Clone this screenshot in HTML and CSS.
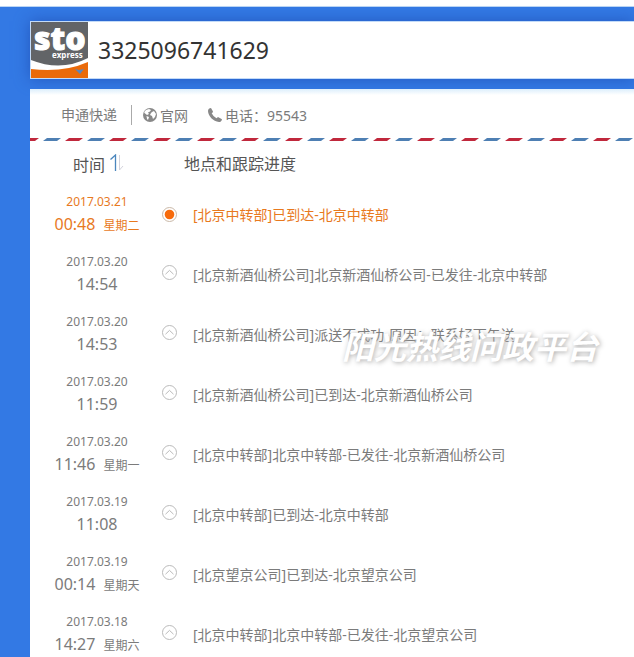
FILE: index.html
```html
<!DOCTYPE html>
<html lang="zh-CN">
<head>
    <meta charset="UTF-8">
    <meta name="viewport" content="width=device-width, initial-scale=1.0">
    <title>申通快递 3325096741629</title>
    <link rel="stylesheet" href="styles.css">
</head>
<body>
    <svg class="sprite" aria-hidden="true">
        <symbol id="up" viewBox="0 0 15 15">
            <circle cx="7.5" cy="7.5" r="7" fill="#fff" stroke="#bbb"/>
            <path d="M3.5 9.2 7.5 5.4l4 3.8" fill="none" stroke="#bbb"/>
        </symbol>
    </svg>
    <main class="page">
        <div class="search">
            <svg class="logo" viewBox="0 0 57 56" role="img" aria-label="sto express">
                <rect width="57" height="56" fill="#626467"/>
                <path d="M0 38q30 12 57-2v20H0z" fill="#fff"/>
                <path d="M0 47q32 4 57-7v16H0z" fill="#ea6a0a"/>
                <path d="M44 47l4 1 5-1-4 5z" fill="#5b86bd"/>
                <text class="logo-name" x="3" y="28">sto</text>
                <text class="logo-sub" x="21" y="36">express</text>
            </svg>
            <input class="number" type="text" value="3325096741629" aria-label="快递单号">
        </div>
        <section class="sheet">
            <nav class="company">
                <span class="company-name">申通快递</span>
                <a class="company-link" href="#">
                    <svg width="14" height="14" viewBox="0 0 14 14">
                        <circle cx="7" cy="7" r="7" fill="#888"/>
                        <path d="M6 1 8 2 7 3.500 5 4.500 6 6 4 7 1.500 5 1.200 4 3 2zM9 4l2-1 2 3-1 3-2 2-1-3-2-1 1-2zM3.500 8 6 9 5 12 4 11z" fill="#fff"/>
                    </svg>
                    官网
                </a>
                <a class="company-link" href="tel:95543">
                    <svg width="14" height="14" viewBox="0 0 14 14">
                        <path d="M3 0 5 3.500Q5 4.500 3.700 5.200 5 8.300 8.500 10.300L10 9l4 2.200q-.5 2.800-3 2.800C5 13.500.3 8 0 3 0 1 1.500.3 3 0z" fill="#888"/>
                    </svg>
                    电话：95543
                </a>
            </nav>
            <svg class="stripe" aria-hidden="true">
                <defs>
                    <pattern id="airmail" x="-9" width="44" height="3" patternUnits="userSpaceOnUse">
                        <path d="M4 0h14l-4 3H0z" fill="#c0283c"/>
                        <path d="M26 0h14l-4 3H22z" fill="#4e7fb3"/>
                    </pattern>
                </defs>
                <rect width="100%" height="3" fill="url(#airmail)"/>
            </svg>
            <table class="track">
                <colgroup>
                    <col class="col-when">
                    <col class="col-mark">
                    <col>
                </colgroup>
                <thead>
                    <tr>
                        <th class="head-time">
                            <span>时间</span>
                            <svg width="15" height="18" viewBox="0 0 15 18">
                                <path d="M1.500 5.500 6.500 1v16" fill="none" stroke="#4a86bd" stroke-width="1.300"/>
                                <path d="M10.500 1v15l3.500-4" fill="none" stroke="#d3d3dc"/>
                            </svg>
                        </th>
                        <th class="head-place" colspan="2">地点和跟踪进度</th>
                    </tr>
                </thead>
                <tbody>
                    <tr class="current">
                        <td class="when"><div class="date">2017.03.21</div><div class="time">00:48<span class="week">星期二</span></div></td>
                        <td class="mark">
                            <svg width="15" height="15" viewBox="0 0 15 15">
                                <circle cx="7.5" cy="7.5" r="7" fill="#fff" stroke="#c9b8a8"/>
                                <circle cx="7.5" cy="7.5" r="4.8" fill="#f76b0c"/>
                            </svg>
                        </td>
                        <td class="place">[北京中转部]已到达-北京中转部</td>
                    </tr>
                    <tr>
                        <td class="when"><div class="date">2017.03.20</div><div class="time">14:54</div></td>
                        <td class="mark"><svg width="15" height="15"><use href="#up"/></svg></td>
                        <td class="place">[北京新酒仙桥公司]北京新酒仙桥公司-已发往-北京中转部</td>
                    </tr>
                    <tr>
                        <td class="when"><div class="date">2017.03.20</div><div class="time">14:53</div></td>
                        <td class="mark"><svg width="15" height="15"><use href="#up"/></svg></td>
                        <td class="place">[北京新酒仙桥公司]派送不成功-原因：联系好下午送</td>
                    </tr>
                    <tr>
                        <td class="when"><div class="date">2017.03.20</div><div class="time">11:59</div></td>
                        <td class="mark"><svg width="15" height="15"><use href="#up"/></svg></td>
                        <td class="place">[北京新酒仙桥公司]已到达-北京新酒仙桥公司</td>
                    </tr>
                    <tr>
                        <td class="when"><div class="date">2017.03.20</div><div class="time">11:46<span class="week">星期一</span></div></td>
                        <td class="mark"><svg width="15" height="15"><use href="#up"/></svg></td>
                        <td class="place">[北京中转部]北京中转部-已发往-北京新酒仙桥公司</td>
                    </tr>
                    <tr>
                        <td class="when"><div class="date">2017.03.19</div><div class="time">11:08</div></td>
                        <td class="mark"><svg width="15" height="15"><use href="#up"/></svg></td>
                        <td class="place">[北京中转部]已到达-北京中转部</td>
                    </tr>
                    <tr>
                        <td class="when"><div class="date">2017.03.19</div><div class="time">00:14<span class="week">星期天</span></div></td>
                        <td class="mark"><svg width="15" height="15"><use href="#up"/></svg></td>
                        <td class="place">[北京望京公司]已到达-北京望京公司</td>
                    </tr>
                    <tr>
                        <td class="when"><div class="date">2017.03.18</div><div class="time">14:27<span class="week">星期六</span></div></td>
                        <td class="mark"><svg width="15" height="15"><use href="#up"/></svg></td>
                        <td class="place">[北京中转部]北京中转部-已发往-北京望京公司</td>
                    </tr>
                </tbody>
            </table>
            <div class="watermark">阳光热线问政平台</div>
        </section>
    </main>
</body>
</html>
```

FILE: styles.css
```css
* {
    box-sizing: border-box;
}
body {
    margin: 0;
    padding-top: 6px;
    height: 100vh;
    overflow: hidden;
    background-color: #fff;
    color: #7b7b7b;
    font-family: "Noto Sans", "Noto Sans CJK SC", sans-serif;
    font-size: 14px;
}
.sprite {
    display: none;
}
.page {
    padding: 14px 0 0 30px;
    border-top: 1px solid #bcd6f5;
    background-color: #3379e4;
}

/* search box */
.search {
    display: flex;
    height: 58px;
    border: 1px solid #c3dbf8;
    border-right: 0;
    background-color: #fff;
    box-shadow: 0 0 14px #2459bf;
}
.logo {
    flex: none;
    width: 57px;
    height: 56px;
}
.logo-name {
    font-family: "Open Sans", sans-serif;
    font-size: 32px;
    font-weight: 800;
    fill: #fff;
    stroke: #fff;
}
.logo-sub {
    font-family: "Open Sans", sans-serif;
    font-size: 8px;
    font-weight: 700;
    fill: #fff;
}
.number {
    flex: 1;
    min-width: 0;
    padding: 0 10px;
    border: 0;
    outline: 0;
    background: none;
    color: #333;
    font-family: inherit;
    font-size: 23px;
}

/* result sheet */
.sheet {
    position: relative;
    margin-top: 10px;
    background: linear-gradient(#dceefc, #fff 6px);
}
.company {
    display: flex;
    align-items: center;
    height: 49px;
    padding: 3px 0 0 31px;
}
.company-name {
    margin-right: 11px;
    padding-right: 14px;
    border-right: 1px solid #aaa;
    line-height: 20px;
}
.company-link {
    display: flex;
    align-items: center;
    gap: 3px;
    margin-right: 20px;
    color: inherit;
    text-decoration: none;
}
.stripe {
    display: block;
    width: 100%;
    height: 3px;
}

/* tracking list */
.track {
    width: 100%;
    table-layout: fixed;
    border-collapse: collapse;
}
.col-when {
    width: 132px;
}
.col-mark {
    width: 31px;
}
.track th,
.track td {
    padding: 0;
}
.track th {
    height: 44px;
    color: #555;
    font-size: 16px;
    font-weight: 400;
    text-align: left;
}
.track .head-time {
    padding-left: 43px;
}
.head-time span,
.head-time svg {
    vertical-align: middle;
}
.track .head-place {
    padding-left: 22px;
}
.track tbody tr {
    height: 60px;
}
.track .when {
    padding: 0 0 2px 2px;
    text-align: center;
}
.date {
    font-size: 12px;
    line-height: 22px;
}
.time {
    height: 24px;
    font-size: 16px;
    line-height: 22px;
}
.week {
    margin-left: 8px;
    font-size: 12px;
}
.track .mark {
    padding-bottom: 5px;
}
.mark svg {
    display: block;
}
.current {
    color: #e8791e;
}
.track .current .mark {
    padding-bottom: 2px;
}
.track .place {
    padding-bottom: 2px;
}

/* stamp lying over the list */
.watermark {
    position: absolute;
    top: 234px;
    right: 36px;
    color: #fff;
    font-size: 32px;
    font-style: italic;
    font-weight: 700;
    line-height: 48px;
    text-shadow: 1px 1px 5px #aaa;
}
```
